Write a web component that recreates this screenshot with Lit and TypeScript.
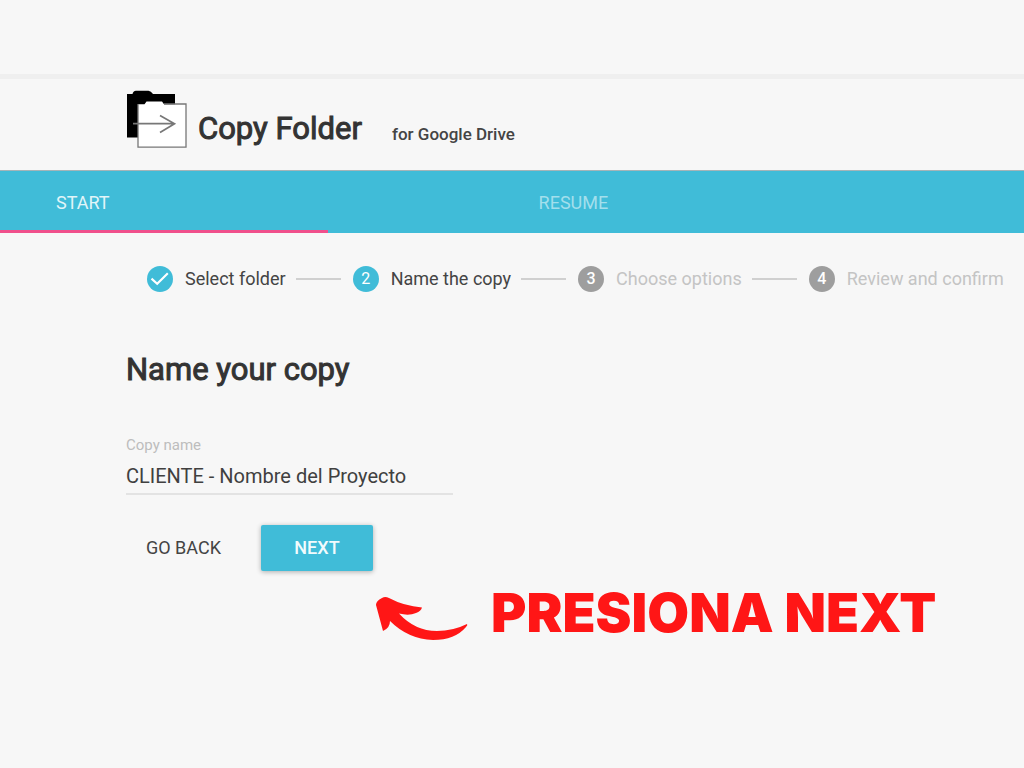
import { LitElement, html, css, nothing } from "lit";
import { customElement, property, state } from "lit/decorators.js";

@customElement("step-item")
class StepItem extends LitElement {
  @property({ type: Number }) number = 1;
  @property() label = "";
  @property() status = "pending";

  static styles = css`
    :host {
      display: flex;
      align-items: center;
      gap: 12px;
      white-space: nowrap;
    }
    .badge {
      width: 26px;
      height: 26px;
      border-radius: 50%;
      background: #9e9e9e;
      color: #fff;
      display: flex;
      align-items: center;
      justify-content: center;
      font-size: 16px;
      line-height: 26px;
      font-weight: 500;
    }
    .badge.done,
    .badge.active {
      background: #40bcd8;
    }
    .badge.active {
      font-weight: 400;
    }
    .label {
      font-size: 18px;
      line-height: 26px;
      color: #c4c4c4;
    }
    .label.done,
    .label.active {
      color: #444;
    }
  `;

  render() {
    return html`
      <span class="badge ${this.status}">
        ${this.status === "done"
          ? html`<svg width="26" height="26" viewBox="0 0 26 26" aria-hidden="true">
              <path d="M4.5 12.6 L10.2 17.8 L20.8 7.2" fill="none" stroke="#fff" stroke-width="2.1" />
            </svg>`
          : this.number}
      </span>
      <span class="label ${this.status}">${this.label}</span>
    `;
  }
}

@customElement("app-root")
class AppRoot extends LitElement {
  @state() private copyName = "CLIENTE - Nombre del Proyecto";

  private steps = [
    { label: "Select folder", status: "done" },
    { label: "Name the copy", status: "active" },
    { label: "Choose options", status: "pending" },
    { label: "Review and confirm", status: "pending" },
  ];

  static styles = css`
    :host {
      display: block;
      min-height: 100vh;
      overflow-x: hidden;
      background: #f7f7f7;
      color: #333;
      font-family: Roboto, "Liberation Sans", sans-serif;
    }
    .top {
      height: 74px;
      border-bottom: 5px solid #efefef;
    }
    header {
      display: flex;
      align-items: flex-end;
      padding: 11px 126px 22px;
    }
    .logo {
      display: block;
      margin-right: 11px;
    }
    h1,
    h2 {
      margin: 0;
      font-size: 31px;
      line-height: 38px;
      font-weight: 400;
      -webkit-text-stroke: 1px #333;
    }
    .product {
      margin-left: 30px;
      font-size: 17px;
      line-height: 28px;
      font-weight: 500;
      color: #444;
    }
    nav {
      display: flex;
      height: 62px;
      background: #40bcd8;
      border-top: 1px solid #a5b4b8;
    }
    .tab {
      box-sizing: border-box;
      width: 48%;
      font-size: 18px;
      line-height: 64px;
      text-align: center;
      text-decoration: none;
      color: #a3dfec;
    }
    .tab.current {
      width: 32%;
      padding-left: 56px;
      text-align: left;
      color: #e2f5f9;
      border-bottom: 3px solid #f0508c;
    }
    .steps {
      display: flex;
      align-items: center;
      list-style: none;
      margin: 0;
      padding: 33px 0 0 147px;
    }
    .steps li {
      display: flex;
      align-items: center;
    }
    .line {
      width: 45px;
      height: 2px;
      margin: 0 12px 0 10px;
      background: #d0d0d0;
    }
    form {
      padding: 59px 126px 0;
    }
    .field {
      display: flex;
      flex-direction: column;
      width: 327px;
      margin-top: 46px;
    }
    label {
      font-size: 15px;
      line-height: 20px;
      color: #bdbdbd;
    }
    input {
      border: 0;
      border-bottom: 2px solid #e3e3e3;
      border-radius: 0;
      outline: 0;
      margin-top: 6px;
      padding: 0 0 2px;
      height: 30px;
      background: none;
      font: 20px/30px Roboto, "Liberation Sans", sans-serif;
      color: #404040;
    }
    .actions {
      display: flex;
      margin-top: 30px;
    }
    button {
      border: 0;
      border-radius: 2px;
      height: 46px;
      padding: 0 20px;
      background: none;
      font: 18px/46px Roboto, "Liberation Sans", sans-serif;
      color: #444;
    }
    button.primary {
      width: 112px;
      margin-left: 20px;
      background: #40bcd8;
      color: #f2fbfd;
      font-weight: 500;
      box-shadow: 0 1px 5px rgba(0, 0, 0, 0.3);
    }
    .hint {
      display: flex;
      align-items: center;
      gap: 22px;
      margin: 13px 0 0;
      padding-left: 375px;
      font-family: Inter, "DejaVu Sans", sans-serif;
      font-size: 54px;
      line-height: 52px;
      font-weight: 900;
      color: #ff1616;
      white-space: nowrap;
    }
    .hint svg {
      margin-top: 12px;
    }
  `;

  private onInput(e: Event) {
    this.copyName = (e.target as HTMLInputElement).value;
  }

  render() {
    return html`
      <div class="top"></div>
      <header>
        <svg class="logo" width="61" height="58" viewBox="0 0 61 58" aria-hidden="true">
          <path d="M1 4 H6.5 Q7 1 10 0.7 H22.5 Q25 1 27 4 H49 V47.5 H1 Z" fill="#000" />
          <path
            d="M12 14.2 H18.5 L20.5 11.5 H36 L38 14.2 H60 V57.2 H12 Z"
            fill="#fff"
          />
          <path d="M12 14 V57.2 H60 V14 H38" fill="none" stroke="#777" stroke-width="1.3" />
          <path d="M7 33.7 H48 M34 25.5 L48.5 33.7 L34 42.5" fill="none" stroke="#777" stroke-width="1.7" />
        </svg>
        <h1>Copy Folder</h1>
        <span class="product">for Google Drive</span>
      </header>
      <nav>
        <a class="tab current" href="#start" aria-current="page">START</a>
        <a class="tab" href="#resume">RESUME</a>
      </nav>
      <main>
        <ol class="steps">
          ${this.steps.map(
            (s, i) => html`<li>
              ${i > 0 ? html`<span class="line"></span>` : nothing}
              <step-item .number=${i + 1} .label=${s.label} .status=${s.status}></step-item>
            </li>`
          )}
        </ol>
        <form @submit=${(e: Event) => e.preventDefault()}>
          <h2>Name your copy</h2>
          <div class="field">
            <label for="copy-name">Copy name</label>
            <input id="copy-name" type="text" .value=${this.copyName} @input=${this.onInput} />
          </div>
          <div class="actions">
            <button type="button">GO BACK</button>
            <button type="submit" class="primary">NEXT</button>
          </div>
        </form>
        <p class="hint">
          <svg width="94" height="46" viewBox="0 0 94 46" aria-hidden="true">
            <path
              d="M1 9 Q1 5 7 2 Q10 0 14 2 Q29 10 47 11.5 Q46 15 41 17 Q34 20 24 17.5 Q40 35 62 35 Q78 35 92 28 Q93 29 91 31 Q80 44 58 44 Q33 43 15 25 Q15 32 8 35 Z"
              fill="#ff1616"
            />
          </svg>
          <span>PRESIONA NEXT</span>
        </p>
      </main>
    `;
  }
}
